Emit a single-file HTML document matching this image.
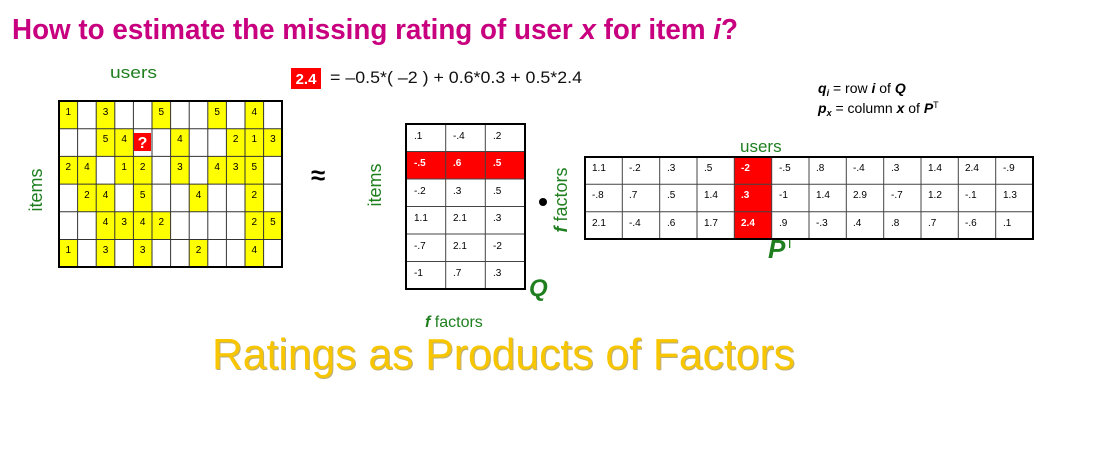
<!DOCTYPE html>
<html><head><meta charset="utf-8"><style>html,body{margin:0;padding:0;background:#fff;width:1110px;height:474px;overflow:hidden}svg{display:block}</style></head>
<body>
<svg width="1110" height="474" viewBox="0 0 1110 474" xmlns="http://www.w3.org/2000/svg" font-family="Liberation Sans, sans-serif">
<text x="12" y="39" font-size="29" font-weight="bold" fill="#c8007f" textLength="726" lengthAdjust="spacingAndGlyphs">How to estimate the missing rating of user <tspan font-style="italic">x</tspan> for item <tspan font-style="italic">i</tspan>?</text>
<text x="110" y="78" font-size="17" fill="#1f7f1f" textLength="47" lengthAdjust="spacingAndGlyphs">users</text>
<rect x="291" y="68" width="30" height="21" fill="#f00"/>
<text x="306" y="84" font-size="15" font-weight="bold" fill="#fff" text-anchor="middle">2.4</text>
<text x="330" y="83" font-size="17" fill="#111" textLength="252" lengthAdjust="spacingAndGlyphs">= –0.5*( –2 ) + 0.6*0.3 + 0.5*2.4</text>
<text x="818" y="93" font-size="14" fill="#000"><tspan font-weight="bold" font-style="italic">q</tspan><tspan font-size="9" dy="3" font-weight="bold" font-style="italic">i</tspan><tspan dy="-3"> = row </tspan><tspan font-weight="bold" font-style="italic">i</tspan> of <tspan font-weight="bold" font-style="italic">Q</tspan></text>
<text x="818" y="113" font-size="14" fill="#000"><tspan font-weight="bold" font-style="italic">p</tspan><tspan font-size="9" dy="3" font-weight="bold" font-style="italic">x</tspan><tspan dy="-3"> = column </tspan><tspan font-weight="bold" font-style="italic">x</tspan> of <tspan font-weight="bold" font-style="italic">P</tspan><tspan font-size="9" dy="-5">T</tspan></text>
<text transform="translate(42,190) rotate(-90)" font-size="18" fill="#1f7f1f" text-anchor="middle">items</text>
<text x="311" y="184" font-size="26" font-weight="bold">≈</text>
<text transform="translate(381,185) rotate(-90)" font-size="18" fill="#1f7f1f" text-anchor="middle">items</text>
<text x="529" y="296" font-size="24" font-weight="bold" font-style="italic" fill="#1f7f1f">Q</text>
<circle cx="543" cy="202" r="4" fill="#000"/>
<text transform="translate(567,200) rotate(-90)" font-size="18" fill="#1f7f1f" text-anchor="middle"><tspan font-weight="bold" font-style="italic">f</tspan> factors</text>
<text x="740" y="152" font-size="17" fill="#1f7f1f">users</text>
<text x="768" y="258" font-size="26" font-weight="bold" font-style="italic" fill="#1f7f1f">P<tspan font-size="14" font-style="normal" font-weight="normal" dy="-10">T</tspan></text>
<text x="425" y="327" font-size="16" fill="#1f7f1f"><tspan font-weight="bold" font-style="italic">f</tspan> factors</text>
<text x="213" y="370" font-size="44" fill="#7a6000" textLength="583" lengthAdjust="spacingAndGlyphs" opacity="0.5">Ratings as Products of Factors</text>
<text x="212" y="369" font-size="44" fill="#f7c600" textLength="583" lengthAdjust="spacingAndGlyphs">Ratings as Products of Factors</text>
<g font-size="10">
<rect x="59" y="101" width="223" height="166" fill="#fff"/>
<g fill="#ffff00">
<rect x="59" y="101" width="18.6" height="27.7"/><rect x="96.2" y="101" width="18.6" height="27.7"/><rect x="152" y="101" width="18.6" height="27.7"/><rect x="207.8" y="101" width="18.6" height="27.7"/><rect x="245" y="101" width="18.6" height="27.7"/>
<rect x="96.2" y="128.7" width="37.2" height="27.7"/><rect x="170.6" y="128.7" width="18.6" height="27.7"/><rect x="226.4" y="128.7" width="55.8" height="27.7"/>
<rect x="59" y="156.4" width="37.2" height="27.7"/><rect x="114.8" y="156.4" width="37.2" height="27.7"/><rect x="170.6" y="156.4" width="18.6" height="27.7"/><rect x="207.8" y="156.4" width="55.8" height="27.7"/>
<rect x="77.6" y="184.1" width="37.2" height="27.7"/><rect x="133.4" y="184.1" width="18.6" height="27.7"/><rect x="189.2" y="184.1" width="18.6" height="27.7"/><rect x="245" y="184.1" width="18.6" height="27.7"/>
<rect x="96.2" y="211.8" width="74.4" height="27.7"/><rect x="245" y="211.8" width="37.2" height="27.7"/>
<rect x="59" y="239.5" width="18.6" height="27.5"/><rect x="96.2" y="239.5" width="18.6" height="27.5"/><rect x="133.4" y="239.5" width="18.6" height="27.5"/><rect x="189.2" y="239.5" width="18.6" height="27.5"/><rect x="245" y="239.5" width="18.6" height="27.5"/>
</g>
<rect x="133.4" y="128.7" width="18.6" height="27.7" fill="#fff"/>
<rect x="134" y="133" width="17" height="18" fill="#f00"/>
<text x="142.5" y="148" font-size="16" font-weight="bold" fill="#fff" text-anchor="middle">?</text>
<g stroke="#333" stroke-width="1">
<path d="M77.6 101V267M96.2 101V267M114.8 101V267M133.4 101V267M152 101V267M170.6 101V267M189.2 101V267M207.8 101V267M226.4 101V267M245 101V267M263.6 101V267"/>
<path d="M59 128.7H282M59 156.4H282M59 184.1H282M59 211.8H282M59 239.5H282"/>
</g>
<rect x="59" y="101" width="223" height="166" fill="none" stroke="#000" stroke-width="2"/>
<g text-anchor="middle">
<text x="68.3" y="115">1</text><text x="105.5" y="115">3</text><text x="161.3" y="115">5</text><text x="217.1" y="115">5</text><text x="254.3" y="115">4</text>
<text x="105.5" y="142">5</text><text x="124.1" y="142">4</text><text x="179.9" y="142">4</text><text x="235.7" y="142">2</text><text x="254.3" y="142">1</text><text x="272.9" y="142">3</text>
<text x="68.3" y="170">2</text><text x="86.9" y="170">4</text><text x="124.1" y="170">1</text><text x="142.7" y="170">2</text><text x="179.9" y="170">3</text><text x="217.1" y="170">4</text><text x="235.7" y="170">3</text><text x="254.3" y="170">5</text>
<text x="86.9" y="198">2</text><text x="105.5" y="198">4</text><text x="142.7" y="198">5</text><text x="198.5" y="198">4</text><text x="254.3" y="198">2</text>
<text x="105.5" y="225">4</text><text x="124.1" y="225">3</text><text x="142.7" y="225">4</text><text x="161.3" y="225">2</text><text x="254.3" y="225">2</text><text x="272.9" y="225">5</text>
<text x="68.3" y="253">1</text><text x="105.5" y="253">3</text><text x="142.7" y="253">3</text><text x="198.5" y="253">2</text><text x="254.3" y="253">4</text>
</g>
</g>
<g font-size="10">
<rect x="406" y="151.5" width="119" height="27.5" fill="#f00"/>
<g stroke="#444"><path d="M445.7 124V289M485.3 124V289M406 151.5H525M406 179H525M406 206.5H525M406 234H525M406 261.5H525"/></g>
<rect x="406" y="124" width="119" height="165" fill="none" stroke="#000" stroke-width="2"/>
<text x="414" y="139">.1</text><text x="453" y="139">-.4</text><text x="493" y="139">.2</text>
<g fill="#fff" font-weight="bold"><text x="414" y="166">-.5</text><text x="453" y="166">.6</text><text x="493" y="166">.5</text></g>
<text x="414" y="194">-.2</text><text x="453" y="194">.3</text><text x="493" y="194">.5</text>
<text x="414" y="221">1.1</text><text x="453" y="221">2.1</text><text x="493" y="221">.3</text>
<text x="414" y="249">-.7</text><text x="453" y="249">2.1</text><text x="493" y="249">-2</text>
<text x="414" y="276">-1</text><text x="453" y="276">.7</text><text x="493" y="276">.3</text>
</g>
<g font-size="10">
<rect x="734.3" y="157" width="37.3" height="82" fill="#f00"/>
<g stroke="#444"><path d="M622.3 157V239M659.7 157V239M697 157V239M734.3 157V239M771.7 157V239M809 157V239M846.3 157V239M883.7 157V239M921 157V239M958.3 157V239M995.7 157V239M585 184.3H1033M585 211.7H1033"/></g>
<rect x="585" y="157" width="448" height="82" fill="none" stroke="#000" stroke-width="2"/>
<g>
<text x="592" y="171">1.1</text><text x="629" y="171">-.2</text><text x="667" y="171">.3</text><text x="704" y="171">.5</text><text x="779" y="171">-.5</text><text x="816" y="171">.8</text><text x="853" y="171">-.4</text><text x="891" y="171">.3</text><text x="928" y="171">1.4</text><text x="965" y="171">2.4</text><text x="1003" y="171">-.9</text>
<text x="592" y="198">-.8</text><text x="629" y="198">.7</text><text x="667" y="198">.5</text><text x="704" y="198">1.4</text><text x="779" y="198">-1</text><text x="816" y="198">1.4</text><text x="853" y="198">2.9</text><text x="891" y="198">-.7</text><text x="928" y="198">1.2</text><text x="965" y="198">-.1</text><text x="1003" y="198">1.3</text>
<text x="592" y="226">2.1</text><text x="629" y="226">-.4</text><text x="667" y="226">.6</text><text x="704" y="226">1.7</text><text x="779" y="226">.9</text><text x="816" y="226">-.3</text><text x="853" y="226">.4</text><text x="891" y="226">.8</text><text x="928" y="226">.7</text><text x="965" y="226">-.6</text><text x="1003" y="226">.1</text>
</g>
<g fill="#fff" font-weight="bold"><text x="741" y="171">-2</text><text x="741" y="198">.3</text><text x="741" y="226">2.4</text></g>
</g>
</svg>
</body></html>
